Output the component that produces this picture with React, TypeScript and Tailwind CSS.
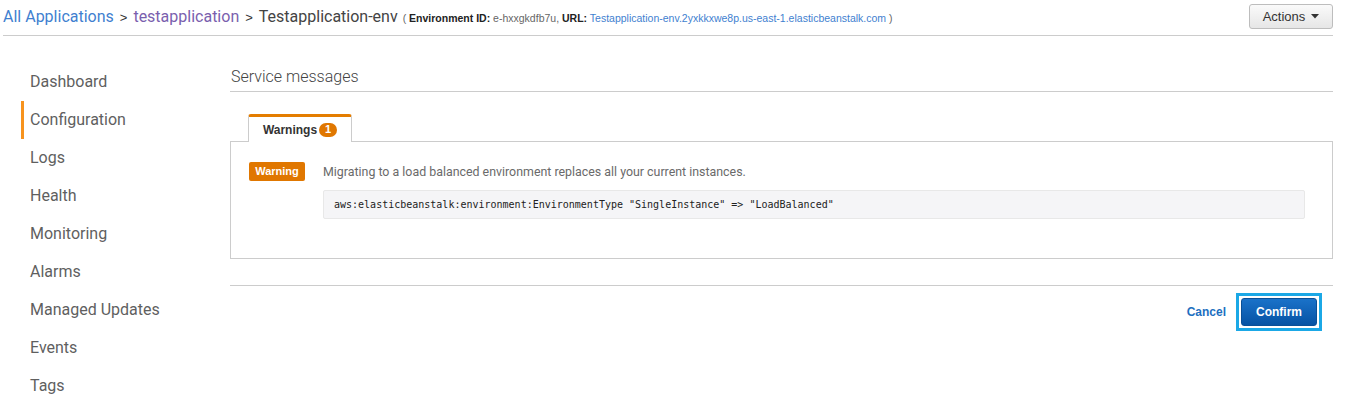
import React from "react";

const nav = ["Dashboard", "Configuration", "Logs", "Health", "Monitoring", "Alarms", "Managed Updates", "Events", "Tags"];

export default function App() {
  return (
    <div className="w-[1346px] h-[400px] bg-white overflow-hidden font-['Roboto',sans-serif]">
      {/* Header */}
      <div className="ml-[3px] mr-[13px] h-[36px] border-b border-[#cccccc] flex items-start justify-between">
        <div className="flex items-baseline pt-[5px] whitespace-nowrap">
          <span className="text-[16px] text-[#3f7fd0]">All Applications</span>
          <span className="mx-[6px] text-[13px] text-[#333] font-['Liberation_Sans',sans-serif]">&gt;</span>
          <span className="text-[16px] text-[#7a5fae]">testapplication</span>
          <span className="mx-[6px] text-[13px] text-[#333] font-['Liberation_Sans',sans-serif]">&gt;</span>
          <span className="text-[16px] text-[#444]">Testapplication-env</span>
          <span className="ml-[5px] text-[10.5px] font-['Liberation_Sans',sans-serif] text-[#666]">
            (&nbsp;<b className="text-[#222]">Environment ID:</b> e-hxxgkdfb7u, <b className="text-[#222]">URL:</b>{" "}
            <span className="text-[#3f7fd0]">Testapplication-env.2yxkkxwe8p.us-east-1.elasticbeanstalk.com</span> )
          </span>
        </div>
        <button className="mt-[4px] h-[25px] w-[84px] rounded-[3px] border border-[#bdbdbd] bg-gradient-to-b from-[#fafafa] to-[#e6e6e6] flex items-center justify-center gap-[6px] text-[13px] text-[#333] font-['Liberation_Sans',sans-serif]">
          Actions
          <svg width="8" height="5" viewBox="0 0 8 5"><path d="M0 0h8L4 4.5z" fill="#333" /></svg>
        </button>
      </div>

      <div className="flex">
        {/* Sidebar */}
        <div className="w-[230px] shrink-0 pt-[27px] pl-[21px]">
          {nav.map((n) => (
            <div
              key={n}
              className={
                "h-[38px] flex items-center pl-[6px] text-[16px] text-[#5f5f5f] border-l-[3px] " +
                (n === "Configuration" ? "border-[#f7931e]" : "border-transparent")
              }
            >
              {n}
            </div>
          ))}
        </div>

        {/* Main */}
        <div className="flex-1 mr-[13px] pt-[29px]">
          <div className="border-b border-[#cccccc] pb-[2px] pl-[1px] text-[16px] font-light text-[#444]">Service messages</div>
          <div className="mt-[22px] pl-[18px] flex">
            <div className="relative -mb-px z-10 w-[104px] h-[28px] bg-white border-x border-[#cccccc] border-t-[3px] border-t-[#e47d00] rounded-t-[3px] flex items-center justify-center gap-[2px] font-['Liberation_Sans',sans-serif]">
              <span className="text-[12px] font-bold text-[#333]">Warnings</span>
              <span className="h-[14px] min-w-[18px] px-[5px] rounded-full bg-[#e07700] text-white text-[11px] font-bold flex items-center justify-center">1</span>
            </div>
          </div>
          <div className="border border-[#cccccc] h-[118px] pl-[18px] pr-[27px] pt-[20px]">
            <div className="flex items-start">
              <span className="w-[56px] h-[19px] rounded-[2px] bg-[#e07700] text-white text-[11px] font-bold font-['Liberation_Sans',sans-serif] flex items-center justify-center">Warning</span>
              <div className="ml-[18px] flex-1">
                <div className="text-[12.4px] text-[#6a6a6a] leading-[19px]">Migrating to a load balanced environment replaces all your current instances.</div>
                <div className="mt-[9px] h-[29px] bg-[#f5f5f7] border border-[#e8e8e8] rounded-[2px] pl-[10px] flex items-center text-[10px] text-[#222] font-['DejaVu_Sans_Mono',monospace] whitespace-pre">
                  aws:elasticbeanstalk:environment:EnvironmentType "SingleInstance" =&gt; "LoadBalanced"
                </div>
              </div>
            </div>
          </div>
          <div className="mt-[26px] border-t border-[#cccccc] flex justify-end items-center pt-[7px] pr-[11px] gap-[10px]">
            <span className="text-[12px] font-bold text-[#1d6fbf] font-['Liberation_Sans',sans-serif]">Cancel</span>
            <div className="border-[3px] border-[#1ba8e6] p-[2px]">
              <button className="w-[76px] h-[28px] rounded-[3px] border border-[#0a4f96] bg-gradient-to-b from-[#1a72c9] to-[#0653a4] text-white text-[12px] font-bold font-['Liberation_Sans',sans-serif]">
                Confirm
              </button>
            </div>
          </div>
        </div>
      </div>
    </div>
  );
}
